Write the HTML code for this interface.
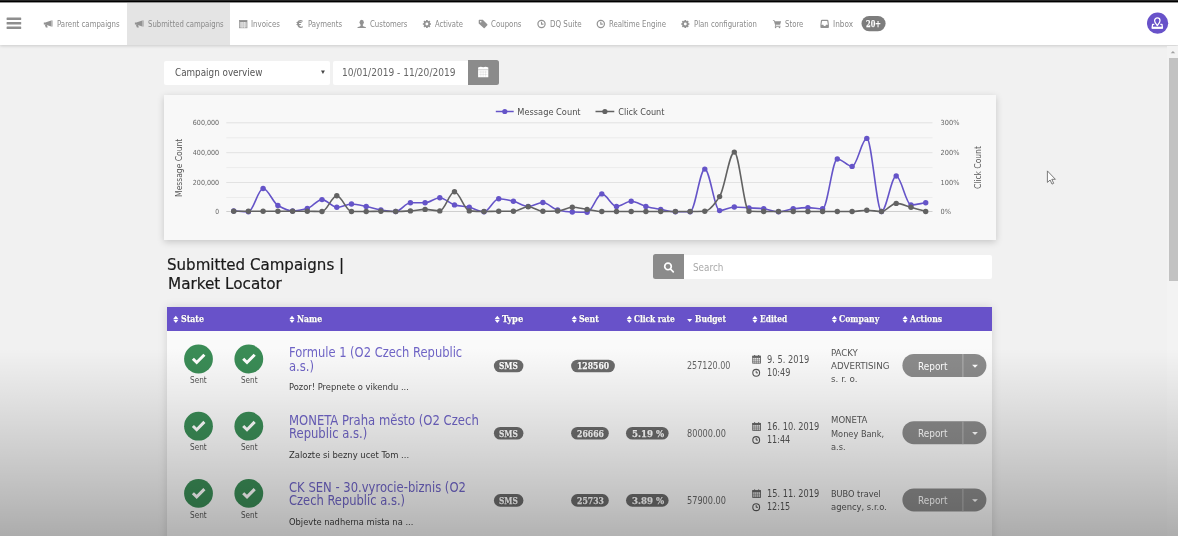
<!DOCTYPE html>
<html lang="en"><head><meta charset="utf-8"><title>Submitted Campaigns | Market Locator</title>
<style>
html,body{margin:0;padding:0}
body{width:1178px;height:536px;overflow:hidden;position:relative;background:#f1f1f1;font-family:"DejaVu Sans Condensed","Liberation Sans",sans-serif}
.abs{position:absolute}
.t{position:absolute;white-space:nowrap;line-height:1;transform-origin:0 0;display:block}
#nav{left:0;top:0;width:1178px;height:45px;background:#fff;box-shadow:0 1px 3px rgba(0,0,0,.16)}
#topline{left:0;top:0;width:1178px;height:3px;background:linear-gradient(#666 0,#000 .8px,#000 2.100px,rgba(0,0,0,0) 2.800px)}
#active{left:127px;top:2.500px;width:103.200px;height:42.500px;background:#e4e4e4}
#track{left:1167px;top:46px;width:11px;height:490px;background:#f3f3f3}
#thumb{left:1168.500px;top:57.500px;width:9.500px;height:223px;background:#c2c2c2}
#sel{left:163.800px;top:60.500px;width:166.100px;height:24px;background:#fff;border-radius:2px}
#date{left:333px;top:60.500px;width:135.100px;height:24px;background:#fff;border-radius:2px 0 0 2px}
#calbtn{left:468.100px;top:59.800px;width:30.600px;height:25px;background:#8b8b8b;border-radius:0 2.500px 2.500px 0}
#card{left:164.200px;top:94.500px;width:831.600px;height:145.300px;background:#f8f8f8;box-shadow:0 2px 7px rgba(0,0,0,.18)}
#sbtn{left:653.200px;top:254.300px;width:31px;height:24.400px;background:#8b8b8b;border-radius:2.500px 0 0 2.500px}
#sinp{left:684.200px;top:254.900px;width:307.800px;height:23.800px;background:#fff;border-radius:0 2px 2px 0}
#table{left:167.100px;top:307.100px;width:825px;height:240px;background:#fafafa;box-shadow:0 0 9px rgba(0,0,0,.13)}
#thead{left:167.100px;top:307.100px;width:825px;height:23.500px;background:#6852c9}
#shade{left:0;top:0;width:1178px;height:536px;pointer-events:none;background:linear-gradient(to bottom,rgba(0,0,0,0) 348px,rgba(0,0,0,.07) 400px,rgba(0,0,0,.145) 450px,rgba(0,0,0,.225) 500px,rgba(0,0,0,.285) 536px)}
svg{position:absolute;left:0;top:0}
#w{position:absolute;left:0;top:0;width:1178px;height:536px;filter:blur(.5px)}
</style></head>
<body>
<div id="w">
<div id="nav" class="abs"></div><div id="active" class="abs"></div><div id="topline" class="abs"></div>
<div id="track" class="abs"></div><div id="thumb" class="abs"></div>
<div id="sel" class="abs"></div><div id="date" class="abs"></div><div id="calbtn" class="abs"></div>
<div id="card" class="abs"></div>
<div id="sbtn" class="abs"></div><div id="sinp" class="abs"></div>
<div id="table" class="abs"></div><div id="thead" class="abs"></div>
<svg width="1178" height="536" viewBox="0 0 1178 536">
<rect x="6.6" y="17.6" width="14.6" height="2.3" rx=".5" fill="#8e8e8e"/>
<rect x="6.6" y="22.1" width="14.6" height="2.3" rx=".5" fill="#8e8e8e"/>
<rect x="6.6" y="26.6" width="14.6" height="2.3" rx=".5" fill="#8e8e8e"/>
<g transform="translate(43.8,20.4)"><path fill="#929292" d="M0 2.100h1.500L7.400 0v6.200L1.500 4.100H0z"/><rect x="7.400" y="0" width="1.400" height="6.200" fill="#ababab"/><path fill="#929292" d="M.9 4.100h2.200l.8 3.100H2z"/></g>
<g transform="translate(134.9,20.4)"><path fill="#929292" d="M0 2.100h1.500L7.400 0v6.200L1.500 4.100H0z"/><rect x="7.400" y="0" width="1.400" height="6.200" fill="#ababab"/><path fill="#929292" d="M.9 4.100h2.200l.8 3.100H2z"/></g>
<g transform="translate(239.2,20)"><rect x=".4" y=".4" width="7.400" height="7.400" fill="#d4d4d4" stroke="#9a9a9a" stroke-width=".8"/><rect x=".4" y=".4" width="7.400" height="1.700" fill="#8e8e8e"/><path d="M2.900 2.100v5.700M5.300 2.100v5.700" stroke="#f4f4f4" stroke-width=".7"/><path d="M.8 4h6.600M.8 5.900h6.600" stroke="#bdbdbd" stroke-width=".5"/></g>
<text x="296.5" y="28" font-family="DejaVu Sans Condensed,Liberation Sans,sans-serif" font-weight="700" font-size="10.8" fill="#929292">€</text>
<g transform="translate(357.3,19.800)" fill="#929292"><ellipse cx="4.400" cy="2.500" rx="2.150" ry="2.500"/><path d="M3.300 4.300h2.200v1.300c0 .5.300.8.900 1l1.700.6c.5.200.7.500.7 1.100H0c0-.6.200-.9.700-1.100l1.700-.6c.6-.2.900-.5.900-1z"/></g>
<path fill-rule="evenodd" fill="#929292" d="M430.97,23.18 L430.97,24.82 L430.03,24.87 L429.73,25.60 L430.36,26.29 L429.19,27.46 L428.50,26.83 L427.77,27.13 L427.72,28.07 L426.08,28.07 L426.03,27.13 L425.30,26.83 L424.61,27.46 L423.44,26.29 L424.07,25.60 L423.77,24.87 L422.83,24.82 L422.83,23.18 L423.77,23.13 L424.07,22.40 L423.44,21.71 L424.61,20.54 L425.30,21.17 L426.03,20.87 L426.08,19.93 L427.72,19.93 L427.77,20.87 L428.50,21.17 L429.19,20.54 L430.36,21.71 L429.73,22.40 L430.03,23.13Z M428.34999999999997,24 a1.45,1.45 0 1,0 -2.9,0 a1.45,1.45 0 1,0 2.9,0Z"/>
<path fill-rule="evenodd" fill="#929292" d="M689.37,23.18 L689.37,24.82 L688.43,24.87 L688.13,25.60 L688.76,26.29 L687.59,27.46 L686.90,26.83 L686.17,27.13 L686.12,28.07 L684.48,28.07 L684.43,27.13 L683.70,26.83 L683.01,27.46 L681.84,26.29 L682.47,25.60 L682.17,24.87 L681.23,24.82 L681.23,23.18 L682.17,23.13 L682.47,22.40 L681.84,21.71 L683.01,20.54 L683.70,21.17 L684.43,20.87 L684.48,19.93 L686.12,19.93 L686.17,20.87 L686.90,21.17 L687.59,20.54 L688.76,21.71 L688.13,22.40 L688.43,23.13Z M686.75,24 a1.45,1.45 0 1,0 -2.9,0 a1.45,1.45 0 1,0 2.9,0Z"/>
<g transform="translate(478.7,19.8)" fill="#929292"><path fill-rule="evenodd" d="M0 .6C0 .3.3 0 .6 0h3.5l4.5 4.5c.3.3.3.7 0 1L6 8.1c-.3.3-.7.3-1 0L0 3.6zM1.2 2a.8.8 0 1 0 1.6 0a.8.8 0 1 0-1.6 0z"/></g>
<g fill="none" stroke="#929292" stroke-width="1.2"><circle cx="541.5" cy="24" r="3.6"/><path d="M541.5 21.84V24.1H543.48" stroke-width="1.08"/></g>
<g fill="none" stroke="#929292" stroke-width="1.2"><circle cx="600.8" cy="24" r="3.6"/><path d="M600.8 21.84V24.1H602.78" stroke-width="1.08"/></g>
<g transform="translate(772.9,20)" fill="#929292"><path d="M0 .2h1.6l.4 1h6.2l-1 3.6H2.6L3 5.8h4.6v.9H1.9L2.2 5 1 1.1H0z"/><circle cx="2.7" cy="7.5" r=".8"/><circle cx="6.6" cy="7.5" r=".8"/></g>
<g transform="translate(820.4,19.8)"><path fill="#929292" fill-rule="evenodd" d="M1.6 0h5.3c.5 0 1 .3 1.100 .8L8.500 5v2.300c0 .6-.4 1-1 1h-6.500c-.6 0-1-.4-1-1V5L.5.8C.6.300 1.100 0 1.600 0zM1.700 1.100L1 5h1.900l.6 1.200h1.500L5.600 5h1.900l-.7-3.900z"/></g>
<rect x="861.5" y="15.9" width="24.1" height="15.3" rx="7.65" fill="#7d7d7d"/>
<circle cx="1157.6" cy="23.2" r="10.6" fill="#6852c9"/>
<g fill="none" stroke="#fff" stroke-width="1.25" stroke-linejoin="round"><path d="M1157.300 25.700c-1.400-1.900-2.700-3.400-2.700-5a2.700 2.700 0 0 1 5.400 0c0 1.600-1.300 3.100-2.700 5z"/><path d="M1154.300 24.400h-1.700l-.5 3.700h10.400l-.5-3.700h-1.700"/></g>
<rect x="1152.100" y="26.700" width="10.400" height="1.900" fill="#fff"/>
<path d="M321 70.500h3.900l-1.950 3.400z" fill="#444"/>
<g transform="translate(478.1,66.5)"><path fill="#fff" d="M0 1.07Q2.55 -0.21 5.10 0.86Q7.65 -0.21 10.2 1.07V10.7H0z"/><path d="M0 3.21H10.2" stroke="#8b8b8b" stroke-width=".9" stroke-opacity=".45" fill="none"/><path d="M0.82 5.56H9.38M0.82 7.92H9.38M2.75 4.28V10.16M5.10 4.28V10.16M7.45 4.28V10.16" stroke="#8b8b8b" stroke-width=".4" stroke-opacity=".4" fill="none"/></g>
<g fill="none" stroke="#fff" stroke-width="1.650" stroke-linecap="round"><circle cx="668" cy="266.400" r="3.300"/><path d="M670.600 269.200l2.700 2.700"/></g>
<path d="M226.300 122.8H932.500" stroke="#e2e2e2" stroke-width="1" fill="none"/>
<path d="M226.300 137.8H932.500" stroke="#ececec" stroke-width="1" fill="none"/>
<path d="M226.300 152.7H932.500" stroke="#e2e2e2" stroke-width="1" fill="none"/>
<path d="M226.300 167.6H932.500" stroke="#ececec" stroke-width="1" fill="none"/>
<path d="M226.300 182.5H932.500" stroke="#e2e2e2" stroke-width="1" fill="none"/>
<path d="M226.300 197.5H932.500" stroke="#ececec" stroke-width="1" fill="none"/>
<path d="M226.300 211.5H932.500" stroke="#cfcfcf" stroke-width="1" fill="none"/>
<path d="M233.7 210.9C238.6 211.2 243.5 211.8 248.4 211.8C253.3 211.8 258.2 188.5 263.1 188.5C268.1 188.5 273.0 202.8 277.9 205.5C282.8 208.2 287.7 210.9 292.6 210.9C297.5 210.9 302.4 209.8 307.3 208.5C312.2 207.2 317.1 199.6 322.0 199.6C326.9 199.6 331.9 207.3 336.8 207.3C341.7 207.3 346.6 204.0 351.5 204.0C356.4 204.0 361.3 205.4 366.2 206.4C371.1 207.4 376.0 209.3 380.9 210.0C385.8 210.7 390.7 211.5 395.7 211.5C400.6 211.5 405.5 202.8 410.4 202.8C415.3 202.8 420.2 202.8 425.1 202.8C430.0 202.8 434.9 197.8 439.8 197.8C444.7 197.8 449.6 203.7 454.5 204.9C459.5 206.1 464.4 206.3 469.3 207.3C474.2 208.3 479.1 211.8 484.0 211.8C488.9 211.8 493.8 198.7 498.7 198.7C503.6 198.7 508.5 200.2 513.4 201.3C518.3 202.4 523.3 206.4 528.2 206.4C533.1 206.4 538.0 202.5 542.9 202.5C547.8 202.5 552.7 208.9 557.6 210.0C562.5 211.1 567.4 211.9 572.3 212.0C577.2 212.1 582.1 212.2 587.1 212.2C592.0 212.2 596.9 193.9 601.8 193.9C606.7 193.9 611.6 206.4 616.5 206.4C621.4 206.4 626.3 201.3 631.2 201.3C636.1 201.3 641.0 205.1 645.9 206.4C650.9 207.7 655.8 208.5 660.7 209.4C665.6 210.3 670.5 211.8 675.4 211.8C680.3 211.8 685.2 211.8 690.1 211.8C695.0 211.8 699.9 169.1 704.8 169.1C709.7 169.1 714.7 210.6 719.6 210.6C724.5 210.6 729.4 207.0 734.3 207.0C739.2 207.0 744.1 207.6 749.0 207.9C753.9 208.2 758.8 208.3 763.7 208.8C768.6 209.3 773.5 211.8 778.5 211.8C783.4 211.8 788.3 209.4 793.2 208.8C798.1 208.2 803.0 207.6 807.9 207.6C812.8 207.6 817.7 208.8 822.6 208.8C827.5 208.8 832.4 159.0 837.3 159.0C842.3 159.0 847.2 166.4 852.1 166.4C857.0 166.4 861.9 138.4 866.8 138.4C871.7 138.4 876.6 211.5 881.5 211.5C886.4 211.5 891.3 176.0 896.2 176.0C901.1 176.0 906.1 204.9 911.0 204.9C915.9 204.9 920.8 203.5 925.7 202.8" fill="none" stroke="#6554c8" stroke-width="1.600" stroke-linejoin="round"/>
<g fill="#6554c8"><circle cx="233.7" cy="210.9" r="2.700"/><circle cx="248.4" cy="211.8" r="2.700"/><circle cx="263.1" cy="188.5" r="2.700"/><circle cx="277.9" cy="205.5" r="2.700"/><circle cx="292.6" cy="210.9" r="2.700"/><circle cx="307.3" cy="208.5" r="2.700"/><circle cx="322.0" cy="199.6" r="2.700"/><circle cx="336.8" cy="207.3" r="2.700"/><circle cx="351.5" cy="204.0" r="2.700"/><circle cx="366.2" cy="206.4" r="2.700"/><circle cx="380.9" cy="210.0" r="2.700"/><circle cx="395.7" cy="211.5" r="2.700"/><circle cx="410.4" cy="202.8" r="2.700"/><circle cx="425.1" cy="202.8" r="2.700"/><circle cx="439.8" cy="197.8" r="2.700"/><circle cx="454.5" cy="204.9" r="2.700"/><circle cx="469.3" cy="207.3" r="2.700"/><circle cx="484.0" cy="211.8" r="2.700"/><circle cx="498.7" cy="198.7" r="2.700"/><circle cx="513.4" cy="201.3" r="2.700"/><circle cx="528.2" cy="206.4" r="2.700"/><circle cx="542.9" cy="202.5" r="2.700"/><circle cx="557.6" cy="210.0" r="2.700"/><circle cx="572.3" cy="212.0" r="2.700"/><circle cx="587.1" cy="212.2" r="2.700"/><circle cx="601.8" cy="193.9" r="2.700"/><circle cx="616.5" cy="206.4" r="2.700"/><circle cx="631.2" cy="201.3" r="2.700"/><circle cx="645.9" cy="206.4" r="2.700"/><circle cx="660.7" cy="209.4" r="2.700"/><circle cx="675.4" cy="211.8" r="2.700"/><circle cx="690.1" cy="211.8" r="2.700"/><circle cx="704.8" cy="169.1" r="2.700"/><circle cx="719.6" cy="210.6" r="2.700"/><circle cx="734.3" cy="207.0" r="2.700"/><circle cx="749.0" cy="207.9" r="2.700"/><circle cx="763.7" cy="208.8" r="2.700"/><circle cx="778.5" cy="211.8" r="2.700"/><circle cx="793.2" cy="208.8" r="2.700"/><circle cx="807.9" cy="207.6" r="2.700"/><circle cx="822.6" cy="208.8" r="2.700"/><circle cx="837.3" cy="159.0" r="2.700"/><circle cx="852.1" cy="166.4" r="2.700"/><circle cx="866.8" cy="138.4" r="2.700"/><circle cx="881.5" cy="211.5" r="2.700"/><circle cx="896.2" cy="176.0" r="2.700"/><circle cx="911.0" cy="204.9" r="2.700"/><circle cx="925.7" cy="202.8" r="2.700"/></g>
<path d="M233.7 211.2C238.6 211.2 243.5 211.2 248.4 211.2C253.3 211.2 258.2 211.2 263.1 211.2C268.1 211.2 273.0 211.2 277.9 211.2C282.8 211.2 287.7 211.2 292.6 211.2C297.5 211.2 302.4 211.2 307.3 211.2C312.2 211.2 317.1 211.5 322.0 211.5C326.9 211.5 331.9 195.7 336.8 195.7C341.7 195.7 346.6 211.5 351.5 211.5C356.4 211.5 361.3 211.5 366.2 211.5C371.1 211.5 376.0 211.2 380.9 211.2C385.8 211.2 390.7 211.5 395.7 211.5C400.6 211.5 405.5 211.2 410.4 210.9C415.3 210.6 420.2 209.4 425.1 209.4C430.0 209.4 434.9 210.9 439.8 210.9C444.7 210.9 449.6 191.8 454.5 191.8C459.5 191.8 464.4 210.5 469.3 210.9C474.2 211.3 479.1 211.5 484.0 211.5C488.9 211.5 493.8 211.3 498.7 211.3C503.6 211.3 508.5 211.3 513.4 211.3C518.3 211.3 523.3 206.7 528.2 206.7C533.1 206.7 538.0 211.3 542.9 211.3C547.8 211.3 552.7 211.2 557.6 211.0C562.5 210.8 567.4 207.3 572.3 207.3C577.2 207.3 582.1 208.7 587.1 209.4C592.0 210.1 596.9 211.5 601.8 211.5C606.7 211.5 611.6 211.5 616.5 211.5C621.4 211.5 626.3 211.5 631.2 211.5C636.1 211.5 641.0 211.5 645.9 211.5C650.9 211.5 655.8 211.5 660.7 211.5C665.6 211.5 670.5 211.5 675.4 211.5C680.3 211.5 685.2 211.5 690.1 211.5C695.0 211.5 699.9 211.4 704.8 211.2C709.7 211.0 714.7 203.9 719.6 196.6C724.5 189.3 729.4 152.1 734.3 152.1C739.2 152.1 744.1 211.2 749.0 211.3C753.9 211.4 758.8 211.5 763.7 211.5C768.6 211.5 773.5 211.5 778.5 211.5C783.4 211.5 788.3 211.5 793.2 211.5C798.1 211.5 803.0 211.5 807.9 211.5C812.8 211.5 817.7 211.5 822.6 211.5C827.5 211.5 832.4 211.5 837.3 211.5C842.3 211.5 847.2 211.5 852.1 211.5C857.0 211.5 861.9 210.3 866.8 210.3C871.7 210.3 876.6 211.5 881.5 211.5C886.4 211.5 891.3 203.4 896.2 203.4C901.1 203.4 906.1 206.0 911.0 207.3C915.9 208.6 920.8 210.1 925.7 211.5" fill="none" stroke="#626262" stroke-width="1.600" stroke-linejoin="round"/>
<g fill="#626262"><circle cx="233.7" cy="211.2" r="2.700"/><circle cx="248.4" cy="211.2" r="2.700"/><circle cx="263.1" cy="211.2" r="2.700"/><circle cx="277.9" cy="211.2" r="2.700"/><circle cx="292.6" cy="211.2" r="2.700"/><circle cx="307.3" cy="211.2" r="2.700"/><circle cx="322.0" cy="211.5" r="2.700"/><circle cx="336.8" cy="195.7" r="2.700"/><circle cx="351.5" cy="211.5" r="2.700"/><circle cx="366.2" cy="211.5" r="2.700"/><circle cx="380.9" cy="211.2" r="2.700"/><circle cx="395.7" cy="211.5" r="2.700"/><circle cx="410.4" cy="210.9" r="2.700"/><circle cx="425.1" cy="209.4" r="2.700"/><circle cx="439.8" cy="210.9" r="2.700"/><circle cx="454.5" cy="191.8" r="2.700"/><circle cx="469.3" cy="210.9" r="2.700"/><circle cx="484.0" cy="211.5" r="2.700"/><circle cx="498.7" cy="211.3" r="2.700"/><circle cx="513.4" cy="211.3" r="2.700"/><circle cx="528.2" cy="206.7" r="2.700"/><circle cx="542.9" cy="211.3" r="2.700"/><circle cx="557.6" cy="211.0" r="2.700"/><circle cx="572.3" cy="207.3" r="2.700"/><circle cx="587.1" cy="209.4" r="2.700"/><circle cx="601.8" cy="211.5" r="2.700"/><circle cx="616.5" cy="211.5" r="2.700"/><circle cx="631.2" cy="211.5" r="2.700"/><circle cx="645.9" cy="211.5" r="2.700"/><circle cx="660.7" cy="211.5" r="2.700"/><circle cx="675.4" cy="211.5" r="2.700"/><circle cx="690.1" cy="211.5" r="2.700"/><circle cx="704.8" cy="211.2" r="2.700"/><circle cx="719.6" cy="196.6" r="2.700"/><circle cx="734.3" cy="152.1" r="2.700"/><circle cx="749.0" cy="211.3" r="2.700"/><circle cx="763.7" cy="211.5" r="2.700"/><circle cx="778.5" cy="211.5" r="2.700"/><circle cx="793.2" cy="211.5" r="2.700"/><circle cx="807.9" cy="211.5" r="2.700"/><circle cx="822.6" cy="211.5" r="2.700"/><circle cx="837.3" cy="211.5" r="2.700"/><circle cx="852.1" cy="211.5" r="2.700"/><circle cx="866.8" cy="210.3" r="2.700"/><circle cx="881.5" cy="211.5" r="2.700"/><circle cx="896.2" cy="203.4" r="2.700"/><circle cx="911.0" cy="207.3" r="2.700"/><circle cx="925.7" cy="211.5" r="2.700"/></g>
<path d="M495.800 111.500H513.700" stroke="#6554c8" stroke-width="1.5"/><circle cx="504.800" cy="111.500" r="2.600" fill="#6554c8"/>
<path d="M595.500 111.500H614.300" stroke="#626262" stroke-width="1.500"/><circle cx="604.900" cy="111.500" r="2.600" fill="#626262"/>
<text x="517.3" y="114.5" font-family="DejaVu Sans Condensed,Liberation Sans,sans-serif" font-size="9.1" fill="#4d4d4d" textLength="63.3" lengthAdjust="spacingAndGlyphs" text-anchor="start">Message Count</text>
<text x="618.2" y="114.5" font-family="DejaVu Sans Condensed,Liberation Sans,sans-serif" font-size="9.1" fill="#4d4d4d" textLength="46.3" lengthAdjust="spacingAndGlyphs" text-anchor="start">Click Count</text>
<text x="192.8" y="125.3" font-family="DejaVu Sans Condensed,Liberation Sans,sans-serif" font-size="7" fill="#666" textLength="26.3" lengthAdjust="spacingAndGlyphs" text-anchor="start">600,000</text>
<text x="192.8" y="155.2" font-family="DejaVu Sans Condensed,Liberation Sans,sans-serif" font-size="7" fill="#666" textLength="26.3" lengthAdjust="spacingAndGlyphs" text-anchor="start">400,000</text>
<text x="192.8" y="185.0" font-family="DejaVu Sans Condensed,Liberation Sans,sans-serif" font-size="7" fill="#666" textLength="26.3" lengthAdjust="spacingAndGlyphs" text-anchor="start">200,000</text>
<text x="215.2" y="214" font-family="DejaVu Sans Condensed,Liberation Sans,sans-serif" font-size="7" fill="#666" textLength="3.8" lengthAdjust="spacingAndGlyphs" text-anchor="start">0</text>
<text x="940.6" y="125.3" font-family="DejaVu Sans Condensed,Liberation Sans,sans-serif" font-size="7" fill="#666" textLength="18.8" lengthAdjust="spacingAndGlyphs" text-anchor="start">300%</text>
<text x="940.6" y="155.2" font-family="DejaVu Sans Condensed,Liberation Sans,sans-serif" font-size="7" fill="#666" textLength="18.8" lengthAdjust="spacingAndGlyphs" text-anchor="start">200%</text>
<text x="940.6" y="185.0" font-family="DejaVu Sans Condensed,Liberation Sans,sans-serif" font-size="7" fill="#666" textLength="18.8" lengthAdjust="spacingAndGlyphs" text-anchor="start">100%</text>
<text x="940.6" y="214" font-family="DejaVu Sans Condensed,Liberation Sans,sans-serif" font-size="7" fill="#666" textLength="10.5" lengthAdjust="spacingAndGlyphs" text-anchor="start">0%</text>
<text x="181.6" y="167.8" font-family="DejaVu Sans Condensed,Liberation Sans,sans-serif" font-size="8.6" fill="#555" textLength="58.2" lengthAdjust="spacingAndGlyphs" text-anchor="middle" transform="rotate(-90 181.6 167.8)">Message Count</text>
<text x="981.2" y="167.6" font-family="DejaVu Sans Condensed,Liberation Sans,sans-serif" font-size="8.6" fill="#555" textLength="43" lengthAdjust="spacingAndGlyphs" text-anchor="middle" transform="rotate(-90 981.2 167.6)">Click Count</text>
<path d="M173.2 318.9l2.6-3.1 2.6 3.1zM173.2 319.79999999999995h5.2l-2.6 3.1z" fill="#fff"/>
<path d="M289.4 318.9l2.6-3.1 2.6 3.1zM289.4 319.79999999999995h5.2l-2.6 3.1z" fill="#fff"/>
<path d="M494.7 318.9l2.6-3.1 2.6 3.1zM494.7 319.79999999999995h5.2l-2.6 3.1z" fill="#fff"/>
<path d="M571.7 318.9l2.6-3.1 2.6 3.1zM571.7 319.79999999999995h5.2l-2.6 3.1z" fill="#fff"/>
<path d="M626.7 318.9l2.6-3.1 2.6 3.1zM626.7 319.79999999999995h5.2l-2.6 3.1z" fill="#fff"/>
<path d="M752.3 318.9l2.6-3.1 2.6 3.1zM752.3 319.79999999999995h5.2l-2.6 3.1z" fill="#fff"/>
<path d="M831.8 318.9l2.6-3.1 2.6 3.1zM831.8 319.79999999999995h5.2l-2.6 3.1z" fill="#fff"/>
<path d="M902.5 318.9l2.6-3.1 2.6 3.1zM902.5 319.79999999999995h5.2l-2.6 3.1z" fill="#fff"/>
<path d="M687.100 318.900h5.100l-2.550 3.100z" fill="#fff"/>
<circle cx="198.5" cy="359.0" r="14.400" fill="#3a8c56"/>
<path d="M192.9 358.8l3.800 3.700 7.700-7.800" fill="none" stroke="#fff" stroke-width="3"/>
<circle cx="248.8" cy="359.0" r="14.400" fill="#3a8c56"/>
<path d="M243.2 358.8l3.800 3.700 7.700-7.800" fill="none" stroke="#fff" stroke-width="3"/>
<rect x="493.900" y="359.7" width="29.500" height="12.600" rx="6.300" fill="#6b6b6b"/>
<rect x="571.100" y="359.7" width="43.8" height="12.600" rx="6.300" fill="#6b6b6b"/>
<g transform="translate(752.3,355.0)"><rect x=".45" y="1.20" width="7.70" height="6.95" fill="#f2f2f2" stroke="#666" stroke-width=".9"/><rect x="0" y="0.86" width="8.6" height="2.06" fill="#666"/><rect x="1.72" y="0" width="1.12" height="1.72" fill="#666"/><rect x="5.76" y="0" width="1.12" height="1.72" fill="#666"/><path d="M0 4.82H8.6M0 6.62H8.6M2.41 2.92V8.6M4.30 2.92V8.6M6.19 2.92V8.6" stroke="#666" stroke-width=".55" fill="none"/></g>
<g fill="none" stroke="#555" stroke-width="1.1"><circle cx="756.2" cy="372.8" r="3.4"/><path d="M756.2 370.76V372.90000000000003H758.07" stroke-width="0.9900000000000001"/></g>
<rect x="902.400" y="354.0" width="84" height="23" rx="11.500" fill="#8b8b8b"/>
<path d="M962.900 354.0v23" stroke="#b4b4b4" stroke-width="1"/>
<path d="M972.100 364.8h5.800l-2.900 2.900z" fill="#fff"/>
<circle cx="198.5" cy="426.2" r="14.400" fill="#3a8c56"/>
<path d="M192.9 426.0l3.800 3.700 7.700-7.800" fill="none" stroke="#fff" stroke-width="3"/>
<circle cx="248.8" cy="426.2" r="14.400" fill="#3a8c56"/>
<path d="M243.2 426.0l3.800 3.700 7.700-7.800" fill="none" stroke="#fff" stroke-width="3"/>
<rect x="493.900" y="426.9" width="29.500" height="12.600" rx="6.300" fill="#6b6b6b"/>
<rect x="571.100" y="426.9" width="37.7" height="12.600" rx="6.300" fill="#6b6b6b"/>
<rect x="626" y="426.9" width="42.600" height="12.600" rx="6.300" fill="#6b6b6b"/>
<g transform="translate(752.3,422.2)"><rect x=".45" y="1.20" width="7.70" height="6.95" fill="#f2f2f2" stroke="#666" stroke-width=".9"/><rect x="0" y="0.86" width="8.6" height="2.06" fill="#666"/><rect x="1.72" y="0" width="1.12" height="1.72" fill="#666"/><rect x="5.76" y="0" width="1.12" height="1.72" fill="#666"/><path d="M0 4.82H8.6M0 6.62H8.6M2.41 2.92V8.6M4.30 2.92V8.6M6.19 2.92V8.6" stroke="#666" stroke-width=".55" fill="none"/></g>
<g fill="none" stroke="#555" stroke-width="1.1"><circle cx="756.2" cy="440.0" r="3.4"/><path d="M756.2 437.96V440.1H758.07" stroke-width="0.9900000000000001"/></g>
<rect x="902.400" y="421.2" width="84" height="23" rx="11.500" fill="#8b8b8b"/>
<path d="M962.900 421.2v23" stroke="#b4b4b4" stroke-width="1"/>
<path d="M972.100 432.0h5.800l-2.900 2.900z" fill="#fff"/>
<circle cx="198.5" cy="493.4" r="14.400" fill="#3a8c56"/>
<path d="M192.9 493.2l3.800 3.700 7.700-7.800" fill="none" stroke="#fff" stroke-width="3"/>
<circle cx="248.8" cy="493.4" r="14.400" fill="#3a8c56"/>
<path d="M243.2 493.2l3.800 3.700 7.700-7.800" fill="none" stroke="#fff" stroke-width="3"/>
<rect x="493.900" y="494.1" width="29.500" height="12.600" rx="6.300" fill="#6b6b6b"/>
<rect x="571.100" y="494.1" width="37.7" height="12.600" rx="6.300" fill="#6b6b6b"/>
<rect x="626" y="494.1" width="42.600" height="12.600" rx="6.300" fill="#6b6b6b"/>
<g transform="translate(752.3,489.4)"><rect x=".45" y="1.20" width="7.70" height="6.95" fill="#f2f2f2" stroke="#666" stroke-width=".9"/><rect x="0" y="0.86" width="8.6" height="2.06" fill="#666"/><rect x="1.72" y="0" width="1.12" height="1.72" fill="#666"/><rect x="5.76" y="0" width="1.12" height="1.72" fill="#666"/><path d="M0 4.82H8.6M0 6.62H8.6M2.41 2.92V8.6M4.30 2.92V8.6M6.19 2.92V8.6" stroke="#666" stroke-width=".55" fill="none"/></g>
<g fill="none" stroke="#555" stroke-width="1.1"><circle cx="756.2" cy="507.20000000000005" r="3.4"/><path d="M756.2 505.16V507.30000000000007H758.07" stroke-width="0.9900000000000001"/></g>
<rect x="902.400" y="488.4" width="84" height="23" rx="11.500" fill="#8b8b8b"/>
<path d="M962.900 488.4v23" stroke="#b4b4b4" stroke-width="1"/>
<path d="M972.100 499.2h5.800l-2.900 2.900z" fill="#fff"/>
<path d="M1170.700 53.200l2.250-2.300 2.250 2.300z" fill="#a0a0a0"/>
<path d="M1047.400 170.900v11.500l2.700-2.400 1.900 4.100 1.700-.8-1.900-4h3.600z" fill="#fdfdfd" stroke="#6d6d6d" stroke-width=".9" stroke-linejoin="round"/>
</svg>
<span class="t" style="left:56.6px;top:19.90px;font-size:8.92px;color:#8a8a8a;font-family:'DejaVu Sans Condensed','Liberation Sans',sans-serif;font-weight:400;transform:scaleX(0.8715);">Parent campaigns</span>
<span class="t" style="left:147.7px;top:19.90px;font-size:8.92px;color:#8a8a8a;font-family:'DejaVu Sans Condensed','Liberation Sans',sans-serif;font-weight:400;transform:scaleX(0.8608);">Submitted campaigns</span>
<span class="t" style="left:251.4px;top:19.90px;font-size:8.92px;color:#8a8a8a;font-family:'DejaVu Sans Condensed','Liberation Sans',sans-serif;font-weight:400;transform:scaleX(0.8803);">Invoices</span>
<span class="t" style="left:308.0px;top:19.90px;font-size:8.92px;color:#8a8a8a;font-family:'DejaVu Sans Condensed','Liberation Sans',sans-serif;font-weight:400;transform:scaleX(0.8695);">Payments</span>
<span class="t" style="left:369.8px;top:19.90px;font-size:8.92px;color:#8a8a8a;font-family:'DejaVu Sans Condensed','Liberation Sans',sans-serif;font-weight:400;transform:scaleX(0.8699);">Customers</span>
<span class="t" style="left:435.4px;top:19.90px;font-size:8.92px;color:#8a8a8a;font-family:'DejaVu Sans Condensed','Liberation Sans',sans-serif;font-weight:400;transform:scaleX(0.8499);">Activate</span>
<span class="t" style="left:491.2px;top:19.90px;font-size:8.92px;color:#8a8a8a;font-family:'DejaVu Sans Condensed','Liberation Sans',sans-serif;font-weight:400;transform:scaleX(0.8757);">Coupons</span>
<span class="t" style="left:549.6px;top:19.90px;font-size:8.92px;color:#8a8a8a;font-family:'DejaVu Sans Condensed','Liberation Sans',sans-serif;font-weight:400;transform:scaleX(0.8901);">DQ Suite</span>
<span class="t" style="left:608.7px;top:19.90px;font-size:8.92px;color:#8a8a8a;font-family:'DejaVu Sans Condensed','Liberation Sans',sans-serif;font-weight:400;transform:scaleX(0.8736);">Realtime Engine</span>
<span class="t" style="left:693.8px;top:19.90px;font-size:8.92px;color:#8a8a8a;font-family:'DejaVu Sans Condensed','Liberation Sans',sans-serif;font-weight:400;transform:scaleX(0.8632);">Plan configuration</span>
<span class="t" style="left:785.1px;top:19.90px;font-size:8.92px;color:#8a8a8a;font-family:'DejaVu Sans Condensed','Liberation Sans',sans-serif;font-weight:400;transform:scaleX(0.8691);">Store</span>
<span class="t" style="left:833.0px;top:19.90px;font-size:8.92px;color:#8a8a8a;font-family:'DejaVu Sans Condensed','Liberation Sans',sans-serif;font-weight:400;transform:scaleX(0.9130);">Inbox</span>
<span class="t" style="left:866.0px;top:19.60px;font-size:8.23px;color:#fff;font-family:'DejaVu Serif','Liberation Serif',serif;font-weight:700;transform:scaleX(0.8130);-webkit-text-stroke:.25px currentColor;text-shadow:0 0 1.200px rgba(0,0,0,.55);">20+</span>
<span class="t" style="left:175.4px;top:68.00px;font-size:10.01px;color:#555;font-family:'DejaVu Sans Condensed','Liberation Sans',sans-serif;font-weight:400;transform:scaleX(0.9782);">Campaign overview</span>
<span class="t" style="left:342.0px;top:68.00px;font-size:10.15px;color:#666;font-family:'DejaVu Sans Condensed','Liberation Sans',sans-serif;font-weight:400;transform:scaleX(0.9952);">10/01/2019 - 11/20/2019</span>
<span class="t" style="left:167.1px;top:256.50px;font-size:15.64px;color:#1a1a1a;font-family:'DejaVu Sans Condensed','Liberation Sans',sans-serif;font-weight:400;transform:scaleX(1.0709);-webkit-text-stroke:.2px #1a1a1a;">Submitted Campaigns |</span>
<span class="t" style="left:167.6px;top:276.40px;font-size:15.64px;color:#1a1a1a;font-family:'DejaVu Sans Condensed','Liberation Sans',sans-serif;font-weight:400;transform:scaleX(1.0827);-webkit-text-stroke:.2px #1a1a1a;">Market Locator</span>
<span class="t" style="left:692.6px;top:262.00px;font-size:10.43px;color:#aaa;font-family:'DejaVu Sans Condensed','Liberation Sans',sans-serif;font-weight:400;transform:scaleX(0.9423);">Search</span>
<span class="t" style="left:180.8px;top:315.40px;font-size:8.92px;color:#fff;font-family:'DejaVu Serif','Liberation Serif',serif;font-weight:700;transform:scaleX(0.8809);-webkit-text-stroke:.25px currentColor;text-shadow:0 0 1.200px rgba(0,0,0,.55);">State</span>
<span class="t" style="left:296.9px;top:315.40px;font-size:8.92px;color:#fff;font-family:'DejaVu Serif','Liberation Serif',serif;font-weight:700;transform:scaleX(0.8651);-webkit-text-stroke:.25px currentColor;text-shadow:0 0 1.200px rgba(0,0,0,.55);">Name</span>
<span class="t" style="left:502.0px;top:315.40px;font-size:8.92px;color:#fff;font-family:'DejaVu Serif','Liberation Serif',serif;font-weight:700;transform:scaleX(0.9331);-webkit-text-stroke:.25px currentColor;text-shadow:0 0 1.200px rgba(0,0,0,.55);">Type</span>
<span class="t" style="left:578.8px;top:315.40px;font-size:8.92px;color:#fff;font-family:'DejaVu Serif','Liberation Serif',serif;font-weight:700;transform:scaleX(0.8727);-webkit-text-stroke:.25px currentColor;text-shadow:0 0 1.200px rgba(0,0,0,.55);">Sent</span>
<span class="t" style="left:634.2px;top:315.40px;font-size:8.92px;color:#fff;font-family:'DejaVu Serif','Liberation Serif',serif;font-weight:700;transform:scaleX(0.8361);-webkit-text-stroke:.25px currentColor;text-shadow:0 0 1.200px rgba(0,0,0,.55);">Click rate</span>
<span class="t" style="left:694.9px;top:315.40px;font-size:8.92px;color:#fff;font-family:'DejaVu Serif','Liberation Serif',serif;font-weight:700;transform:scaleX(0.8524);-webkit-text-stroke:.25px currentColor;text-shadow:0 0 1.200px rgba(0,0,0,.55);">Budget</span>
<span class="t" style="left:759.9px;top:315.40px;font-size:8.92px;color:#fff;font-family:'DejaVu Serif','Liberation Serif',serif;font-weight:700;transform:scaleX(0.8359);-webkit-text-stroke:.25px currentColor;text-shadow:0 0 1.200px rgba(0,0,0,.55);">Edited</span>
<span class="t" style="left:838.9px;top:315.40px;font-size:8.92px;color:#fff;font-family:'DejaVu Serif','Liberation Serif',serif;font-weight:700;transform:scaleX(0.8718);-webkit-text-stroke:.25px currentColor;text-shadow:0 0 1.200px rgba(0,0,0,.55);">Company</span>
<span class="t" style="left:910.0px;top:315.40px;font-size:8.92px;color:#fff;font-family:'DejaVu Serif','Liberation Serif',serif;font-weight:700;transform:scaleX(0.8614);-webkit-text-stroke:.25px currentColor;text-shadow:0 0 1.200px rgba(0,0,0,.55);">Actions</span>
<span class="t" style="left:190.2px;top:376.10px;font-size:8.50px;color:#555;font-family:'DejaVu Sans Condensed','Liberation Sans',sans-serif;font-weight:400;transform:scaleX(0.9586);">Sent</span>
<span class="t" style="left:240.9px;top:376.10px;font-size:8.50px;color:#555;font-family:'DejaVu Sans Condensed','Liberation Sans',sans-serif;font-weight:400;transform:scaleX(0.9471);">Sent</span>
<span class="t" style="left:289.4px;top:346.30px;font-size:13.31px;color:#6f64c6;font-family:'DejaVu Sans Condensed','Liberation Sans',sans-serif;font-weight:400;transform:scaleX(0.9619);">Formule 1 (O2 Czech Republic</span>
<span class="t" style="left:289.4px;top:359.90px;font-size:13.31px;color:#6f64c6;font-family:'DejaVu Sans Condensed','Liberation Sans',sans-serif;font-weight:400;transform:scaleX(0.9718);">a.s.)</span>
<span class="t" style="left:289.4px;top:382.30px;font-size:9.33px;color:#3a3a3a;font-family:'DejaVu Sans Condensed','Liberation Sans',sans-serif;font-weight:400;transform:scaleX(0.9948);">Pozor! Prepnete o vikendu ...</span>
<span class="t" style="left:499.4px;top:362.30px;font-size:8.92px;color:#fff;font-family:'DejaVu Serif','Liberation Serif',serif;font-weight:700;transform:scaleX(0.8313);-webkit-text-stroke:.25px currentColor;text-shadow:0 0 1.200px rgba(0,0,0,.55);">SMS</span>
<span class="t" style="left:577.2px;top:362.30px;font-size:8.92px;color:#fff;font-family:'DejaVu Serif','Liberation Serif',serif;font-weight:700;transform:scaleX(0.8659);-webkit-text-stroke:.25px currentColor;text-shadow:0 0 1.200px rgba(0,0,0,.55);">128560</span>
<span class="t" style="left:687.3px;top:361.30px;font-size:9.60px;color:#666;font-family:'DejaVu Sans Condensed','Liberation Sans',sans-serif;font-weight:400;transform:scaleX(0.9299);">257120.00</span>
<span class="t" style="left:766.6px;top:354.80px;font-size:9.60px;color:#555;font-family:'DejaVu Sans Condensed','Liberation Sans',sans-serif;font-weight:400;transform:scaleX(0.9611);">9. 5. 2019</span>
<span class="t" style="left:766.6px;top:368.00px;font-size:9.60px;color:#555;font-family:'DejaVu Sans Condensed','Liberation Sans',sans-serif;font-weight:400;transform:scaleX(0.9407);">10:49</span>
<span class="t" style="left:831.4px;top:347.60px;font-size:9.19px;color:#555;font-family:'DejaVu Sans Condensed','Liberation Sans',sans-serif;font-weight:400;transform:scaleX(1.0421);">PACKY</span>
<span class="t" style="left:831.4px;top:360.90px;font-size:9.19px;color:#555;font-family:'DejaVu Sans Condensed','Liberation Sans',sans-serif;font-weight:400;transform:scaleX(1.0529);">ADVERTISING</span>
<span class="t" style="left:831.4px;top:374.10px;font-size:9.19px;color:#555;font-family:'DejaVu Sans Condensed','Liberation Sans',sans-serif;font-weight:400;transform:scaleX(1.0647);">s. r. o.</span>
<span class="t" style="left:917.7px;top:361.90px;font-size:10.70px;color:#fff;font-family:'DejaVu Sans Condensed','Liberation Sans',sans-serif;font-weight:400;transform:scaleX(0.9269);">Report</span>
<span class="t" style="left:190.2px;top:443.30px;font-size:8.50px;color:#555;font-family:'DejaVu Sans Condensed','Liberation Sans',sans-serif;font-weight:400;transform:scaleX(0.9586);">Sent</span>
<span class="t" style="left:240.9px;top:443.30px;font-size:8.50px;color:#555;font-family:'DejaVu Sans Condensed','Liberation Sans',sans-serif;font-weight:400;transform:scaleX(0.9471);">Sent</span>
<span class="t" style="left:289.4px;top:413.50px;font-size:13.31px;color:#6f64c6;font-family:'DejaVu Sans Condensed','Liberation Sans',sans-serif;font-weight:400;transform:scaleX(0.9726);">MONETA Praha město (O2 Czech</span>
<span class="t" style="left:289.4px;top:427.10px;font-size:13.31px;color:#6f64c6;font-family:'DejaVu Sans Condensed','Liberation Sans',sans-serif;font-weight:400;transform:scaleX(0.9702);">Republic a.s.)</span>
<span class="t" style="left:289.4px;top:449.50px;font-size:9.33px;color:#3a3a3a;font-family:'DejaVu Sans Condensed','Liberation Sans',sans-serif;font-weight:400;transform:scaleX(1.0037);">Zalozte si bezny ucet Tom ...</span>
<span class="t" style="left:499.4px;top:429.50px;font-size:8.92px;color:#fff;font-family:'DejaVu Serif','Liberation Serif',serif;font-weight:700;transform:scaleX(0.8313);-webkit-text-stroke:.25px currentColor;text-shadow:0 0 1.200px rgba(0,0,0,.55);">SMS</span>
<span class="t" style="left:576.9px;top:429.50px;font-size:8.92px;color:#fff;font-family:'DejaVu Serif','Liberation Serif',serif;font-weight:700;transform:scaleX(0.8677);-webkit-text-stroke:.25px currentColor;text-shadow:0 0 1.200px rgba(0,0,0,.55);">26666</span>
<span class="t" style="left:631.5px;top:429.50px;font-size:8.92px;color:#fff;font-family:'DejaVu Serif','Liberation Serif',serif;font-weight:700;transform:scaleX(0.9650);-webkit-text-stroke:.25px currentColor;text-shadow:0 0 1.200px rgba(0,0,0,.55);">5.19 %</span>
<span class="t" style="left:687.3px;top:428.50px;font-size:9.60px;color:#666;font-family:'DejaVu Sans Condensed','Liberation Sans',sans-serif;font-weight:400;transform:scaleX(0.9472);">80000.00</span>
<span class="t" style="left:766.6px;top:422.00px;font-size:9.60px;color:#555;font-family:'DejaVu Sans Condensed','Liberation Sans',sans-serif;font-weight:400;transform:scaleX(0.9528);">16. 10. 2019</span>
<span class="t" style="left:766.6px;top:435.20px;font-size:9.60px;color:#555;font-family:'DejaVu Sans Condensed','Liberation Sans',sans-serif;font-weight:400;transform:scaleX(0.9327);">11:44</span>
<span class="t" style="left:831.4px;top:414.90px;font-size:9.19px;color:#555;font-family:'DejaVu Sans Condensed','Liberation Sans',sans-serif;font-weight:400;transform:scaleX(1.0362);">MONETA</span>
<span class="t" style="left:831.4px;top:428.50px;font-size:9.19px;color:#555;font-family:'DejaVu Sans Condensed','Liberation Sans',sans-serif;font-weight:400;transform:scaleX(0.9977);">Money Bank,</span>
<span class="t" style="left:831.4px;top:441.60px;font-size:9.19px;color:#555;font-family:'DejaVu Sans Condensed','Liberation Sans',sans-serif;font-weight:400;transform:scaleX(0.9983);">a.s.</span>
<span class="t" style="left:917.7px;top:429.10px;font-size:10.70px;color:#fff;font-family:'DejaVu Sans Condensed','Liberation Sans',sans-serif;font-weight:400;transform:scaleX(0.9269);">Report</span>
<span class="t" style="left:190.2px;top:510.50px;font-size:8.50px;color:#555;font-family:'DejaVu Sans Condensed','Liberation Sans',sans-serif;font-weight:400;transform:scaleX(0.9586);">Sent</span>
<span class="t" style="left:240.9px;top:510.50px;font-size:8.50px;color:#555;font-family:'DejaVu Sans Condensed','Liberation Sans',sans-serif;font-weight:400;transform:scaleX(0.9471);">Sent</span>
<span class="t" style="left:289.4px;top:480.70px;font-size:13.31px;color:#6f64c6;font-family:'DejaVu Sans Condensed','Liberation Sans',sans-serif;font-weight:400;transform:scaleX(0.9691);">CK SEN - 30.vyrocie-biznis (O2</span>
<span class="t" style="left:289.4px;top:494.30px;font-size:13.31px;color:#6f64c6;font-family:'DejaVu Sans Condensed','Liberation Sans',sans-serif;font-weight:400;transform:scaleX(0.9621);">Czech Republic a.s.)</span>
<span class="t" style="left:289.4px;top:516.70px;font-size:9.33px;color:#3a3a3a;font-family:'DejaVu Sans Condensed','Liberation Sans',sans-serif;font-weight:400;transform:scaleX(0.9921);">Objevte nadherna mista na ...</span>
<span class="t" style="left:499.4px;top:496.70px;font-size:8.92px;color:#fff;font-family:'DejaVu Serif','Liberation Serif',serif;font-weight:700;transform:scaleX(0.8313);-webkit-text-stroke:.25px currentColor;text-shadow:0 0 1.200px rgba(0,0,0,.55);">SMS</span>
<span class="t" style="left:576.9px;top:496.70px;font-size:8.92px;color:#fff;font-family:'DejaVu Serif','Liberation Serif',serif;font-weight:700;transform:scaleX(0.8677);-webkit-text-stroke:.25px currentColor;text-shadow:0 0 1.200px rgba(0,0,0,.55);">25733</span>
<span class="t" style="left:631.5px;top:496.70px;font-size:8.92px;color:#fff;font-family:'DejaVu Serif','Liberation Serif',serif;font-weight:700;transform:scaleX(0.9650);-webkit-text-stroke:.25px currentColor;text-shadow:0 0 1.200px rgba(0,0,0,.55);">3.89 %</span>
<span class="t" style="left:687.3px;top:495.70px;font-size:9.60px;color:#666;font-family:'DejaVu Sans Condensed','Liberation Sans',sans-serif;font-weight:400;transform:scaleX(0.9472);">57900.00</span>
<span class="t" style="left:766.6px;top:489.20px;font-size:9.60px;color:#555;font-family:'DejaVu Sans Condensed','Liberation Sans',sans-serif;font-weight:400;transform:scaleX(0.9528);">15. 11. 2019</span>
<span class="t" style="left:766.6px;top:502.40px;font-size:9.60px;color:#555;font-family:'DejaVu Sans Condensed','Liberation Sans',sans-serif;font-weight:400;transform:scaleX(0.9327);">12:15</span>
<span class="t" style="left:831.4px;top:489.10px;font-size:9.19px;color:#555;font-family:'DejaVu Sans Condensed','Liberation Sans',sans-serif;font-weight:400;transform:scaleX(0.9912);">BUBO travel</span>
<span class="t" style="left:831.4px;top:502.20px;font-size:9.19px;color:#555;font-family:'DejaVu Sans Condensed','Liberation Sans',sans-serif;font-weight:400;transform:scaleX(1.0172);">agency, s.r.o.</span>
<span class="t" style="left:917.7px;top:496.30px;font-size:10.70px;color:#fff;font-family:'DejaVu Sans Condensed','Liberation Sans',sans-serif;font-weight:400;transform:scaleX(0.9269);">Report</span>
</div>
<div id="shade" class="abs"></div>
</body></html>
